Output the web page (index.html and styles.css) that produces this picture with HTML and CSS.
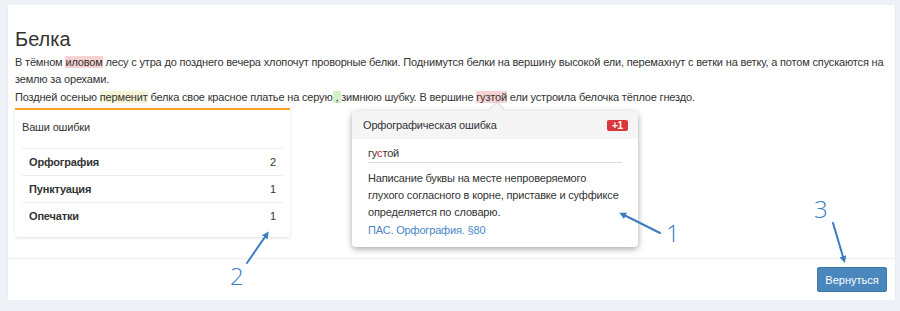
FILE: index.html
```html
<!DOCTYPE html>
<html>
<head>
	<meta charset="UTF-8">
	<title>Белка</title>
	<link rel="stylesheet" href="styles.css">
</head>
<body>
	<div class="panel">
		<div class="content">
			<h1 class="title">Белка</h1>
			<p class="text">В тёмном <span class="err-red">иловом</span> лесу с утра до позднего вечера хлопочут проворные белки. Поднимутся белки на вершину высокой ели, перемахнут с ветки на ветку, а потом спускаются на землю за орехами.</p>
			<p class="text">Поздней осенью <span class="err-yellow">перменит</span> белка свое красное платье на серую<span class="err-green"> , </span> зимнюю шубку. В вершине <span class="err-red">гузтой</span> ели устроила белочка тёплое гнездо.</p>

			<div class="summary">
				<div class="summary-title">Ваши ошибки</div>
				<div class="row"><span class="row-name">Орфография</span><span>2</span></div>
				<div class="row"><span class="row-name">Пунктуация</span><span>1</span></div>
				<div class="row"><span class="row-name">Опечатки</span><span>1</span></div>
			</div>
		</div>
		<div class="footer">
			<button class="btn">Вернуться</button>
		</div>

		<div class="popup">
			<div class="popup-head">
				<span>Орфографическая ошибка</span>
				<span class="badge">+1</span>
			</div>
			<div class="popup-body">
				<div class="word">гу<span class="hl">с</span>той</div>
				<div class="rule">Написание буквы на месте непроверяемого глухого согласного в корне, приставке и суффиксе определяется по словарю.</div>
				<a class="ref" href="#">ПАС. Орфография. §80</a>
			</div>
		</div>

		<svg class="marks" width="900" height="311" viewBox="0 0 900 311">
			<defs>
				<marker id="head" markerWidth="7" markerHeight="7" refX="4" refY="3.5" orient="auto" markerUnits="userSpaceOnUse">
					<path d="M0,0 L7,3.5 L0,7 Z" fill="#3b7cc2"/>
				</marker>
			</defs>
			<g stroke="#3b7cc2" stroke-width="2" stroke-linecap="round" fill="none">
				<line x1="660" y1="233" x2="622" y2="214" marker-end="url(#head)"/>
				<line x1="247" y1="263" x2="267" y2="234" marker-end="url(#head)"/>
				<line x1="833" y1="223" x2="844" y2="260" marker-end="url(#head)"/>
			</g>
			<g fill="#3b7cc2" font-family="Open Sans, sans-serif" font-size="24" font-weight="300">
				<text x="666" y="242">1</text>
				<text x="230" y="285">2</text>
				<text x="814" y="218">3</text>
			</g>
		</svg>
	</div>
</body>
</html>
```

FILE: styles.css
```css
* {
	margin: 0;
	padding: 0;
	box-sizing: border-box;
}

body {
	background-color: #eef1f5;
	padding: 5px 5px 0 8px;
	font-family: "Liberation Sans", Arial, sans-serif;
	font-size: 11px;
	letter-spacing: -0.17px;
	color: #333;
}

.panel {
	position: relative;
	width: 887px;
	height: 295px;
	background-color: #fff;
	box-shadow: 0 1px 2px rgba(0, 0, 0, 0.08);
	display: flex;
	flex-direction: column;
}

.content {
	padding: 22px 7px 0 7px;
	flex: 1;
}

.title {
	font-weight: normal;
	font-size: 20px;
	letter-spacing: 0;
	line-height: 24px;
	margin-bottom: 3px;
}

.text {
	line-height: 17px;
	margin-bottom: 1px;
}

.err-red {
	background-color: #f6d2d2;
}

.err-yellow {
	background-color: #f5f5d5;
}

.err-green {
	background-color: #d3f0ca;
}

.summary {
	width: 275px;
	margin-top: 2px;
	border-top: 2px solid #f5a31f;
	box-shadow: 0 1px 3px rgba(0, 0, 0, 0.12);
	padding: 9px 7px 8px 7px;
}

.summary-title {
	line-height: 16px;
	margin-bottom: 13px;
}

.row {
	display: flex;
	justify-content: space-between;
	border-top: 1px solid #eee;
	padding: 0 7px;
	height: 27px;
	line-height: 26px;
}

.row-name {
	font-weight: bold;
}

.footer {
	border-top: 1px solid #eee;
	height: 42px;
	display: flex;
	justify-content: flex-end;
	align-items: center;
	padding-right: 8px;
}

.btn {
	background-color: #4a87bd;
	border: 1px solid #3f79ac;
	border-radius: 2px;
	color: #fff;
	font-family: "Liberation Sans", Arial, sans-serif;
	font-size: 11px;
	width: 70px;
	height: 25px;
}

.popup {
	position: absolute;
	left: 344px;
	top: 106px;
	width: 286px;
	height: 136px;
	background-color: #fff;
	border-radius: 4px;
	box-shadow: 0 2px 6px rgba(0, 0, 0, 0.35);
}

.popup:before {
	content: "";
	position: absolute;
	left: 140px;
	top: -6px;
	width: 10px;
	height: 10px;
	background-color: #f5f5f5;
	transform: rotate(45deg);
	box-shadow: -1px -1px 2px rgba(0, 0, 0, 0.15);
}

.popup-head {
	position: relative;
	background-color: #f5f5f5;
	height: 28px;
	border-radius: 4px 4px 0 0;
	display: flex;
	justify-content: space-between;
	align-items: center;
	padding: 0 10px 0 11px;
}

.badge {
	background-color: #d9383a;
	color: #fff;
	font-size: 10px;
	font-weight: bold;
	border-radius: 2px;
	padding: 0 5px;
	line-height: 11px;
}

.popup-body {
	padding: 6px 16px 0 16px;
}

.word {
	line-height: 16px;
	padding-bottom: 1px;
	border-bottom: 1px solid #ddd;
	margin-bottom: 7px;
}

.hl {
	color: #e8112d;
}

.rule {
	line-height: 17px;
	width: 254px;
	margin-bottom: 1px;
}

.ref {
	color: #4a86c8;
	text-decoration: none;
	line-height: 17px;
}

.marks {
	position: absolute;
	left: -8px;
	top: -5px;
	pointer-events: none;
}
```
